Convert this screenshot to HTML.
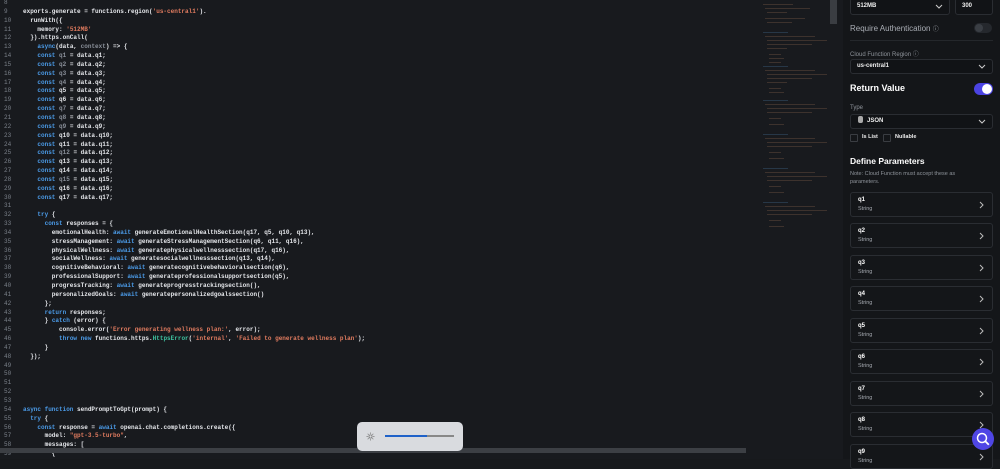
<!DOCTYPE html>
<html><head><meta charset="utf-8"><style>
*{margin:0;padding:0;box-sizing:border-box}
body{width:1000px;height:459px;overflow:hidden;background:#17191c;position:relative;font-family:"Liberation Sans",sans-serif;color:#e8e9ec}
#ed{position:absolute;left:0;top:0;width:843px;height:459px;background:#181a1e}
#code{position:absolute;left:0;top:-1px;font-family:"Liberation Mono",monospace;font-size:6px;line-height:8.85px;color:#e4e6ea;font-weight:bold;white-space:pre}
.ln{display:inline-block;width:23px;padding-left:4px;color:#7b818a;font-weight:normal}
.k{color:#4b9be8}.s{color:#e07b5f}.d{color:#8a909a}.g{color:#3ec3a0}
#mini{position:absolute;left:755px;top:0;width:75px;height:459px}
#vs{position:absolute;left:830px;top:0;width:7px;height:24px;background:#3a3d42}
#hs{position:absolute;left:0;top:448px;width:746px;height:5px;background:#3c3f44}
#panel{position:absolute;left:843px;top:0;width:157px;height:459px;background:#141619}
.box{position:absolute;border:1px solid #2a2d32;border-radius:3px;background:#111316;font-size:6px;font-weight:bold;padding-left:6px;color:#eee}
.lbl{position:absolute;font-size:8px;color:#a9adb4}
.sm{position:absolute;font-size:5.5px;color:#8e939a}
.card{position:absolute;left:850px;width:143px;height:25px;border:1px solid #2a2d32;border-radius:3px;background:#141619}
.card b{position:absolute;left:7px;top:4px;font-size:6px;color:#fff}
.card i{position:absolute;left:7px;top:13px;font-size:5.5px;color:#a5a9b0;font-style:normal}
.card svg{position:absolute;right:8px;top:8px}
</style></head><body>
<div id="ed">
<div id="code"><span class="ln">8</span>
<span class="ln">9</span>exports.generate = functions.region(<span class="s">'us-central1'</span>).
<span class="ln">10</span>  runWith({
<span class="ln">11</span>    memory: <span class="s">'512MB'</span>
<span class="ln">12</span>  }).https.onCall(
<span class="ln">13</span>    <span class="k">async</span>(data, <span class="d">context</span>) => {
<span class="ln">14</span>    <span class="k">const</span> <span class="d">q1</span> = data.q1;
<span class="ln">15</span>    <span class="k">const</span> <span class="d">q2</span> = data.q2;
<span class="ln">16</span>    <span class="k">const</span> <span class="d">q3</span> = data.q3;
<span class="ln">17</span>    <span class="k">const</span> <span class="d">q4</span> = data.q4;
<span class="ln">18</span>    <span class="k">const</span> q5 = data.q5;
<span class="ln">19</span>    <span class="k">const</span> q6 = data.q6;
<span class="ln">20</span>    <span class="k">const</span> <span class="d">q7</span> = data.q7;
<span class="ln">21</span>    <span class="k">const</span> <span class="d">q8</span> = data.q8;
<span class="ln">22</span>    <span class="k">const</span> <span class="d">q9</span> = data.q9;
<span class="ln">23</span>    <span class="k">const</span> q10 = data.q10;
<span class="ln">24</span>    <span class="k">const</span> q11 = data.q11;
<span class="ln">25</span>    <span class="k">const</span> <span class="d">q12</span> = data.q12;
<span class="ln">26</span>    <span class="k">const</span> q13 = data.q13;
<span class="ln">27</span>    <span class="k">const</span> q14 = data.q14;
<span class="ln">28</span>    <span class="k">const</span> <span class="d">q15</span> = data.q15;
<span class="ln">29</span>    <span class="k">const</span> q16 = data.q16;
<span class="ln">30</span>    <span class="k">const</span> q17 = data.q17;
<span class="ln">31</span>
<span class="ln">32</span>    <span class="k">try</span> {
<span class="ln">33</span>      <span class="k">const</span> responses = {
<span class="ln">34</span>        emotionalHealth: <span class="k">await</span> generateEmotionalHealthSection(q17, q5, q10, q13),
<span class="ln">35</span>        stressManagement: <span class="k">await</span> generateStressManagementSection(q6, q11, q16),
<span class="ln">36</span>        physicalWellness: <span class="k">await</span> generatephysicalwellnesssection(q17, q16),
<span class="ln">37</span>        socialWellness: <span class="k">await</span> generatesocialwellnesssection(q13, q14),
<span class="ln">38</span>        cognitiveBehavioral: <span class="k">await</span> generatecognitivebehavioralsection(q6),
<span class="ln">39</span>        professionalSupport: <span class="k">await</span> generateprofessionalsupportsection(q5),
<span class="ln">40</span>        progressTracking: <span class="k">await</span> generateprogresstrackingsection(),
<span class="ln">41</span>        personalizedGoals: <span class="k">await</span> generatepersonalizedgoalssection()
<span class="ln">42</span>      };
<span class="ln">43</span>      <span class="k">return</span> responses;
<span class="ln">44</span>      } <span class="k">catch</span> (error) {
<span class="ln">45</span>          console.error(<span class="s">'Error generating wellness plan:'</span>, error);
<span class="ln">46</span>          <span class="k">throw new</span> functions.https.<span class="g">HttpsError</span>(<span class="s">'internal'</span>, <span class="s">'Failed to generate wellness plan'</span>);
<span class="ln">47</span>      }
<span class="ln">48</span>  });
<span class="ln">49</span>
<span class="ln">50</span>
<span class="ln">51</span>
<span class="ln">52</span>
<span class="ln">53</span>
<span class="ln">54</span><span class="k">async function</span> sendPromptToGpt(prompt) {
<span class="ln">55</span>  <span class="k">try</span> {
<span class="ln">56</span>    <span class="k">const</span> response = <span class="k">await</span> openai.chat.completions.create({
<span class="ln">57</span>      model: <span class="s">"gpt-3.5-turbo"</span>,
<span class="ln">58</span>      messages: [
<span class="ln">59</span>        {</div>
<svg id="mini" width="75" height="459" opacity=".45">
<g fill="#6a5040">
<rect x="8" y="4" width="30" height="1"/><rect x="10" y="8" width="45" height="1"/><rect x="12" y="12" width="20" height="1"/><rect x="10" y="18" width="40" height="1"/><rect x="12" y="22" width="25" height="1"/>
<rect x="10" y="36" width="50" height="1"/><rect x="12" y="40" width="60" height="1"/><rect x="12" y="44" width="45" height="1"/><rect x="12" y="48" width="20" height="1"/><rect x="14" y="54" width="12" height="1"/><rect x="14" y="58" width="15" height="1"/><rect x="14" y="62" width="12" height="1"/>
<rect x="10" y="70" width="50" height="1"/><rect x="12" y="74" width="60" height="1"/><rect x="12" y="78" width="45" height="1"/><rect x="12" y="82" width="20" height="1"/><rect x="14" y="88" width="12" height="1"/><rect x="14" y="92" width="15" height="1"/>
<rect x="10" y="104" width="50" height="1"/><rect x="12" y="108" width="60" height="1"/><rect x="12" y="112" width="45" height="1"/><rect x="14" y="118" width="12" height="1"/><rect x="14" y="124" width="15" height="1"/>
<rect x="10" y="138" width="50" height="1"/><rect x="12" y="142" width="60" height="1"/><rect x="12" y="146" width="45" height="1"/><rect x="14" y="152" width="12" height="1"/><rect x="14" y="158" width="15" height="1"/>
<rect x="10" y="172" width="50" height="1"/><rect x="12" y="176" width="60" height="1"/><rect x="12" y="180" width="45" height="1"/><rect x="14" y="186" width="12" height="1"/><rect x="14" y="192" width="15" height="1"/>
<rect x="10" y="206" width="50" height="1"/><rect x="12" y="210" width="60" height="1"/><rect x="12" y="214" width="45" height="1"/><rect x="14" y="220" width="12" height="1"/><rect x="14" y="226" width="15" height="1"/>
</g>
<g fill="#3a5a7a"><rect x="8" y="32" width="25" height="1"/><rect x="8" y="66" width="25" height="1"/><rect x="8" y="100" width="25" height="1"/><rect x="8" y="134" width="25" height="1"/><rect x="8" y="168" width="25" height="1"/><rect x="8" y="202" width="25" height="1"/></g>
</svg>
<div id="vs"></div>
<div id="hs"></div>
<div style="position:absolute;left:357px;top:422px;width:106px;height:29px;background:#d9dbdf;border-radius:5px">
<svg style="position:absolute;left:9px;top:10px" width="9" height="9" viewBox="0 0 9 9"><circle cx="4.5" cy="4.5" r="1.6" fill="none" stroke="#777" stroke-width=".8"/><g stroke="#777" stroke-width=".7"><path d="M4.5 0.5v1.4M4.5 7.1v1.4M0.5 4.5h1.4M7.1 4.5h1.4M1.7 1.7l1 1M6.3 6.3l1 1M1.7 7.3l1-1M6.3 2.7l1-1"/></g></svg>
<div style="position:absolute;left:28px;top:13px;width:42px;height:2px;background:#1f62c9"></div>
<div style="position:absolute;left:70px;top:13px;width:27px;height:2px;background:#888"></div>
</div>
</div>
<div id="panel"></div>
<div class="box" style="left:850px;top:-2px;width:100px;height:17px;line-height:15px">512MB<svg style="position:absolute;right:6px;top:5px" width="8" height="5"><path d="M1 1l3 3 3-3" stroke="#ccc" fill="none"/></svg></div>
<div class="box" style="left:955px;top:-2px;width:38px;height:17px;line-height:15px">300</div>
<div class="lbl" style="left:850px;top:24px">Require Authentication <span style="font-size:6px">ⓘ</span></div>
<div style="position:absolute;left:974px;top:23px;width:18px;height:10px;border-radius:5px;background:#25282d"><div style="position:absolute;left:1px;top:1px;width:8px;height:8px;border-radius:4px;background:#3a3e44"></div></div>
<div style="position:absolute;left:850px;top:40px;width:143px;height:1px;background:#24272b"></div>
<div class="sm" style="left:850px;top:49px;font-size:6px">Cloud Function Region ⓘ</div>
<div class="box" style="left:850px;top:59px;width:143px;height:15px;line-height:13px">us-central1<svg style="position:absolute;right:6px;top:4px" width="8" height="5"><path d="M1 1l3 3 3-3" stroke="#ccc" fill="none"/></svg></div>
<div style="position:absolute;left:850px;top:83px;font-size:9px;font-weight:bold;color:#fff">Return Value</div>
<div style="position:absolute;left:974px;top:83px;width:19px;height:12px;border-radius:6px;background:#4b43e3"><div style="position:absolute;right:1px;top:1px;width:10px;height:10px;border-radius:5px;background:#fff"></div></div>
<div class="sm" style="left:850px;top:105px;font-size:6px">Type</div>
<div class="box" style="left:850px;top:114px;width:143px;height:15px;line-height:13px;padding-left:7px"><span style="display:inline-block;width:5px;height:7px;background:#aaa;border-radius:2px;vertical-align:-1px;margin-right:4px"></span>JSON<svg style="position:absolute;right:6px;top:4px" width="8" height="5"><path d="M1 1l3 3 3-3" stroke="#ccc" fill="none"/></svg></div>
<div style="position:absolute;left:850px;top:134px;width:8px;height:8px;border:1px solid #3a3d42;border-radius:1px"></div>
<div style="position:absolute;left:862px;top:134px;font-size:5.5px;font-weight:bold;color:#eee">Is List</div>
<div style="position:absolute;left:883px;top:134px;width:8px;height:8px;border:1px solid #3a3d42;border-radius:1px"></div>
<div style="position:absolute;left:895px;top:134px;font-size:5.5px;font-weight:bold;color:#eee">Nullable</div>
<div style="position:absolute;left:850px;top:156px;font-size:8.5px;font-weight:bold;color:#fff">Define Parameters</div>
<div class="sm" style="left:850px;top:170px;line-height:8px;width:130px">Note: Cloud Function must accept these as parameters.</div>
<div class="card" style="top:192px"><b>q1</b><i>String</i><svg width="5" height="8"><path d="M1 1l3 3-3 3" stroke="#bbb" fill="none"/></svg></div>
<div class="card" style="top:223px"><b>q2</b><i>String</i><svg width="5" height="8"><path d="M1 1l3 3-3 3" stroke="#bbb" fill="none"/></svg></div>
<div class="card" style="top:255px"><b>q3</b><i>String</i><svg width="5" height="8"><path d="M1 1l3 3-3 3" stroke="#bbb" fill="none"/></svg></div>
<div class="card" style="top:286px"><b>q4</b><i>String</i><svg width="5" height="8"><path d="M1 1l3 3-3 3" stroke="#bbb" fill="none"/></svg></div>
<div class="card" style="top:318px"><b>q5</b><i>String</i><svg width="5" height="8"><path d="M1 1l3 3-3 3" stroke="#bbb" fill="none"/></svg></div>
<div class="card" style="top:349px"><b>q6</b><i>String</i><svg width="5" height="8"><path d="M1 1l3 3-3 3" stroke="#bbb" fill="none"/></svg></div>
<div class="card" style="top:381px"><b>q7</b><i>String</i><svg width="5" height="8"><path d="M1 1l3 3-3 3" stroke="#bbb" fill="none"/></svg></div>
<div class="card" style="top:412px"><b>q8</b><i>String</i><svg width="5" height="8"><path d="M1 1l3 3-3 3" stroke="#bbb" fill="none"/></svg></div>
<div class="card" style="top:444px"><b>q9</b><i>String</i><svg width="5" height="8"><path d="M1 1l3 3-3 3" stroke="#bbb" fill="none"/></svg></div>
<div style="position:absolute;left:972px;top:428px;width:22px;height:22px;border-radius:11px;background:#4f46e5"><svg width="22" height="22"><circle cx="10" cy="10" r="4.5" stroke="#fff" stroke-width="1.5" fill="none"/><path d="M13.3 13.3l3.5 3.5" stroke="#fff" stroke-width="1.8"/></svg></div>
</body></html>
